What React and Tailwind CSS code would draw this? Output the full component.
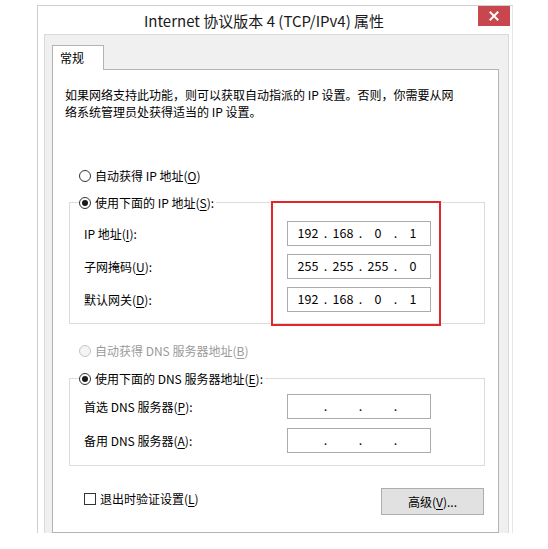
import React, { Fragment } from "react";

function Radio({ checked, disabled }) {
  return (
    <span
      className={
        "flex h-[12px] w-[12px] shrink-0 items-center justify-center rounded-full border " +
        (disabled ? "border-[#c4c4c4] bg-[#f4f4f4]" : "border-[#333333] bg-white")
      }
    >
      {checked && <span className="h-[6px] w-[6px] rounded-full bg-[#1a1a1a]" />}
    </span>
  );
}

function IpField({ parts }) {
  return (
    <div className="flex h-[25px] w-[144px] items-center border border-[#ababab] bg-white pl-[6px] text-[12.5px] leading-none text-black">
      {parts.map((p, i) => (
        <Fragment key={i}>
          {i > 0 && <span className="w-[7px] text-center">.</span>}
          <span className="w-[28px] text-center">{p}</span>
        </Fragment>
      ))}
    </div>
  );
}

function Acc({ children }) {
  return <span className="underline underline-offset-2">{children}</span>;
}

export default function App() {
  return (
    <div className="relative h-[549px] w-[548px] overflow-hidden bg-white font-['Noto_Sans_CJK_SC',sans-serif] text-[12px] text-black">
      <div className="ml-[37px] mt-[5px] flex h-[528px] w-[476px] flex-col overflow-hidden border-l border-r border-t border-l-[#cfcfcf] border-r-[#e6e6e6] border-t-[#cfcfcf] bg-white">
        {/* title bar */}
        <div className="flex h-[28px] shrink-0 items-start">
          <div className="flex h-[28px] flex-1 items-center justify-center pl-[12px] text-[15px] leading-none text-[#1a1a1a]">
            Internet 协议版本 4 (TCP/IPv4) 属性
          </div>
          <div className="mr-[2px] flex h-[20px] w-[32px] items-center justify-center bg-[#c7474d]">
            <svg width="10" height="10" viewBox="0 0 10 10">
              <path d="M1.5 1.5 L8.5 8.5 M8.5 1.5 L1.5 8.5" stroke="white" strokeWidth="2" strokeLinecap="square" />
            </svg>
          </div>
        </div>
        {/* panel */}
        <div className="ml-[6px] mr-[3px] flex flex-1 flex-col border-l border-r border-t border-[#dadada] bg-[#f0f0f0] pl-[7px] pr-[9px] pt-[10px]">
          {/* tab */}
          <div className="relative z-10 -mb-px flex h-[25px] w-[52px] items-center border-l border-r border-t border-[#b4b4b4] bg-white pl-[7px] leading-none">
            常规
          </div>
          {/* page */}
          <div className="flex flex-1 flex-col border border-[#b4b4b4] bg-white">
            <p className="ml-[12px] pt-[16px] leading-[17px]">
              如果网络支持此功能，则可以获取自动指派的 IP 设置。否则，你需要从网
              <br />
              络系统管理员处获得适当的 IP 设置。
            </p>

            <div className="ml-[26px] mt-[47px] flex h-[17px] items-center gap-[4px]">
              <Radio />
              <span>
                自动获得 IP 地址(<Acc>O</Acc>)
              </span>
            </div>

            <fieldset className="ml-[16px] mr-[13px] mt-[10px] border border-[#dcdcdc] pb-[11px] pl-[9px] pt-[10px]">
              <legend className="flex h-[17px] items-center gap-[4px] pr-[2px]">
                <Radio checked />
                <span>
                  使用下面的 IP 地址(<Acc>S</Acc>):
                </span>
              </legend>
              <div className="grid grid-cols-[203px_144px] gap-y-[8px] pl-[5px]">
                <div className="flex h-[25px] items-center">
                  <span>
                    IP 地址(<Acc>I</Acc>):
                  </span>
                </div>
                <IpField parts={["192", "168", "0", "1"]} />
                <div className="flex h-[25px] items-center">
                  <span>
                    子网掩码(<Acc>U</Acc>):
                  </span>
                </div>
                <IpField parts={["255", "255", "255", "0"]} />
                <div className="flex h-[25px] items-center">
                  <span>
                    默认网关(<Acc>D</Acc>):
                  </span>
                </div>
                <IpField parts={["192", "168", "0", "1"]} />
              </div>
            </fieldset>

            <div className="ml-[26px] mt-[18px] flex h-[17px] items-center gap-[4px] text-[#9a9a9a]">
              <Radio disabled />
              <span>
                自动获得 DNS 服务器地址(<Acc>B</Acc>)
              </span>
            </div>

            <fieldset className="ml-[16px] mr-[13px] mt-[11px] border border-[#dcdcdc] pb-[12px] pl-[9px] pt-[7px]">
              <legend className="flex h-[17px] items-center gap-[4px] pr-[2px]">
                <Radio checked />
                <span>
                  使用下面的 DNS 服务器地址(<Acc>E</Acc>):
                </span>
              </legend>
              <div className="grid grid-cols-[203px_144px] gap-y-[9px] pl-[5px]">
                <div className="flex h-[25px] items-center">
                  <span>
                    首选 DNS 服务器(<Acc>P</Acc>):
                  </span>
                </div>
                <IpField parts={["", "", "", ""]} />
                <div className="flex h-[25px] items-center">
                  <span>
                    备用 DNS 服务器(<Acc>A</Acc>):
                  </span>
                </div>
                <IpField parts={["", "", "", ""]} />
              </div>
            </fieldset>

            <div className="ml-[31px] mr-[14px] mt-[22px] flex items-start justify-between">
              <div className="mt-[2px] flex h-[17px] items-center gap-[4px]">
                <span className="h-[12px] w-[12px] border border-[#333333] bg-white" />
                <span>
                  退出时验证设置(<Acc>L</Acc>)
                </span>
              </div>
              <div className="flex h-[27px] w-[103px] items-center justify-center border border-[#adadad] bg-[#e1e1e1] leading-none">
                高级(<Acc>V</Acc>)...
              </div>
            </div>
          </div>
        </div>
      </div>
      <div className="absolute left-[271px] top-[201px] h-[125px] w-[170px] border-2 border-[#e3262c]" />
    </div>
  );
}
